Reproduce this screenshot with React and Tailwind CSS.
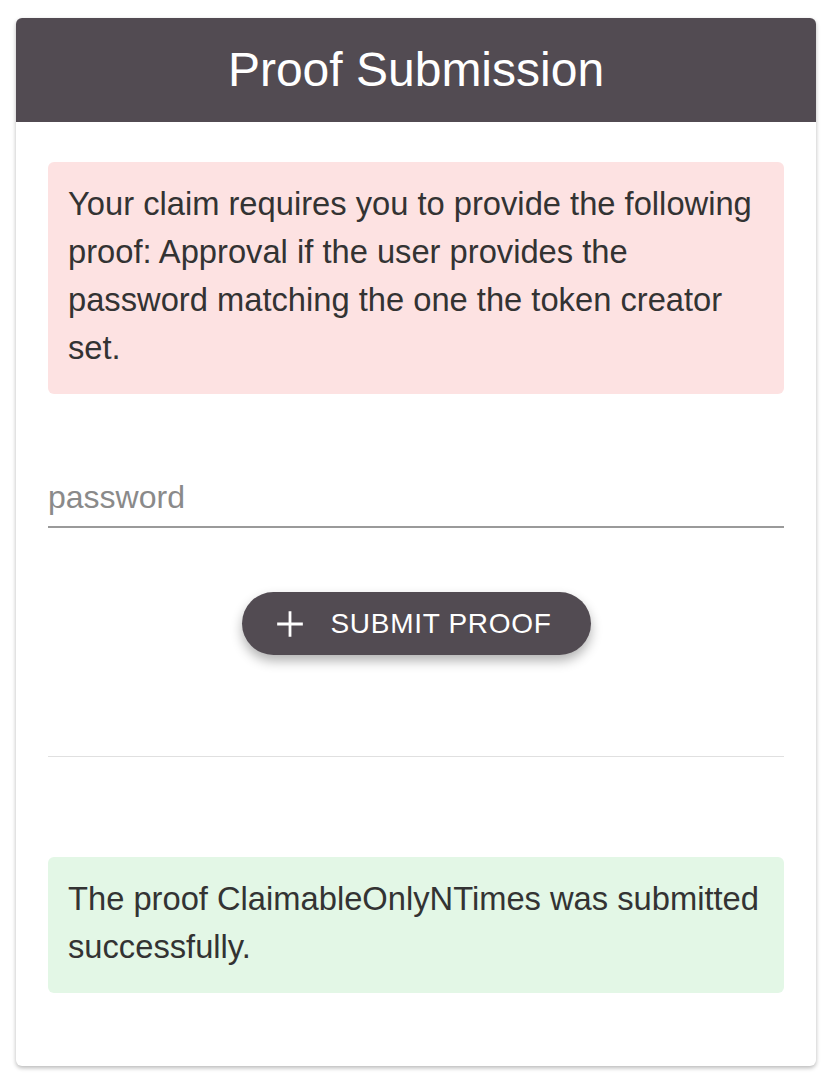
import React from 'react';

const App = () => {
    return (
        <div className="min-h-screen bg-white pt-[18px] px-4 pb-4 font-['Liberation_Sans',Arial,sans-serif]">
            <div className="bg-white rounded-md shadow-[0_2px_4px_rgba(0,0,0,0.28)] overflow-hidden">
                {/* Header */}
                <div className="h-[104px] bg-[#524b52] flex items-center justify-center">
                    <h1 className="text-white text-[48px] leading-none">Proof Submission</h1>
                </div>

                <div className="px-8 pt-10 pb-[73px]">
                    {/* Requirement notice */}
                    <div className="bg-[#fde2e2] rounded-md px-5 pt-[18px] pb-[22px] text-[#333] text-[32.7px] leading-[48px]">
                        Your claim requires you to provide the following proof: Approval if the user provides the password matching the one the token creator set.
                    </div>

                    {/* Password field */}
                    <div className="mt-[86px]">
                        <input
                            type="password"
                            placeholder="password"
                            className="w-full h-[48px] pb-[12px] bg-transparent border-b-2 border-[#9a9a9a] text-[32px] text-[#333] placeholder:text-[#8a8a8a] outline-none"
                        />
                    </div>

                    {/* Submit */}
                    <div className="flex justify-center mt-16">
                        <button className="h-[63px] w-[349px] rounded-full bg-[#524b52] text-white flex items-center justify-center gap-[26px] pr-[4px] shadow-[0_6px_12px_rgba(0,0,0,0.3)]">
                            <svg className="w-[28px] h-[28px]" viewBox="0 0 24 24" fill="none" stroke="currentColor" strokeWidth={2.4}>
                                <path d="M12 1v22M1 12h22" />
                            </svg>
                            <span className="text-[28px] tracking-[0.025em]">SUBMIT PROOF</span>
                        </button>
                    </div>

                    <div className="mt-[101px] border-t border-[#e0e0e0]"></div>

                    {/* Success notice */}
                    <div className="mt-[100px] bg-[#e3f7e6] rounded-md px-5 pt-[18px] pb-[22px] text-[#333] text-[32.7px] leading-[48px]">
                        The proof ClaimableOnlyNTimes was submitted successfully.
                    </div>
                </div>
            </div>
        </div>
    );
};

export default App;
